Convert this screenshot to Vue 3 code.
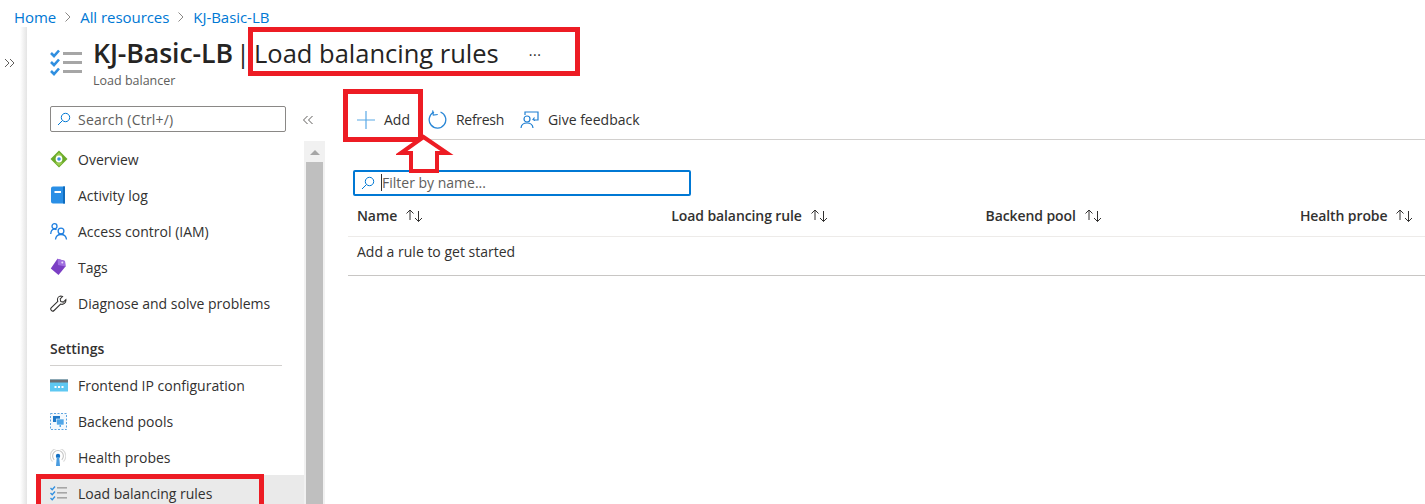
<script setup>
const crumbs = ['Home', 'All resources', 'KJ-Basic-LB']
const top = [
  { id: 'overview', label: 'Overview' },
  { id: 'log', label: 'Activity log' },
  { id: 'iam', label: 'Access control (IAM)' },
  { id: 'tags', label: 'Tags' },
  { id: 'wrench', label: 'Diagnose and solve problems' }
]
const settings = [
  { id: 'frontend', label: 'Frontend IP configuration' },
  { id: 'backend', label: 'Backend pools' },
  { id: 'probe', label: 'Health probes' },
  { id: 'rules', label: 'Load balancing rules', active: true }
]
const cols = ['Name', 'Load balancing rule', 'Backend pool', 'Health probe']
</script>

<template>
  <div class="page">
    <nav class="crumbs">
      <template v-for="(c, i) in crumbs" :key="c">
        <span class="crumb">{{ c }}</span>
        <svg v-if="i < crumbs.length - 1" class="sep" width="8" height="12" viewBox="0 0 8 12"><path d="M1.500 1.500 6 6l-4.500 4.500" fill="none" stroke="#8a8886" stroke-width="1"/></svg>
      </template>
    </nav>
    <div class="body">
      <div class="rail">
        <svg class="rail-chev" width="12" height="10" viewBox="0 0 12 10"><path d="M1 1l4 4-4 4M6 1l4 4-4 4" fill="none" stroke="#605e5c" stroke-width="1"/></svg>
      </div>
      <div class="blade">
        <header class="head">
          <svg class="head-icon" width="32" height="28" viewBox="0 0 32 28">
            <g fill="none" stroke="#2f8fe0" stroke-width="2.600"><path d="M1 4l3 3 5-5.500M1 13l3 3 5-5.500M1 22l3 3 5-5.500"/></g>
            <g fill="#a6a6a6"><rect x="13" y="3" width="19" height="3"/><rect x="13" y="12" width="19" height="3"/><rect x="13" y="21" width="19" height="3"/></g>
          </svg>
          <div class="head-text">
            <h1 class="title"><b>KJ-Basic-LB</b><span class="pipe">|</span><span class="sub-title">Load balancing rules</span><span class="more">···</span></h1>
            <div class="kind">Load balancer</div>
          </div>
        </header>
        <div class="cols">
          <aside class="side">
            <div class="side-top">
              <div class="search">
                <svg width="14" height="14" viewBox="0 0 14 14"><circle cx="8.500" cy="5.500" r="4.200" fill="none" stroke="#0078d4"/><path d="M5.500 8.500 1 13" stroke="#0078d4" fill="none"/></svg>
                <span>Search (Ctrl+/)</span>
              </div>
              <svg class="collapse" width="12" height="10" viewBox="0 0 12 10"><path d="M5.500 1l-4 4 4 4M10.500 1l-4 4 4 4" fill="none" stroke="#605e5c" stroke-width="1"/></svg>
            </div>
            <div class="side-scroll">
              <div class="menu">
                <a v-for="m in top" :key="m.id" class="item">
                  <span class="ico">
                    <svg v-if="m.id === 'overview'" width="18" height="18" viewBox="0 0 18 18"><path d="M9 .5 17.500 9 9 17.500.5 9z" fill="#6bab2a"/><path d="M9 2.500 5.500 6h7zM5 12.500h8L9 16z" fill="#9ccc50"/><circle cx="9" cy="9" r="3.400" fill="#fff"/><circle cx="9" cy="9" r="1.800" fill="#3a8fe0"/></svg>
                    <svg v-else-if="m.id === 'log'" width="16" height="18" viewBox="0 0 16 18"><path d="M1 2.500A2 2 0 0 1 3 .5h12v17H3a2 2 0 0 1-2-2z" fill="#2a8fe6"/><path d="M13 .5h2v17h-2z" fill="#0f6cbd"/><rect x="4.500" y="5" width="6.500" height="2" fill="#fff"/></svg>
                    <svg v-else-if="m.id === 'iam'" width="18" height="17" viewBox="0 0 18 17"><g fill="none" stroke="#1f7fe0" stroke-width="1.300"><circle cx="4.500" cy="3.200" r="2.500"/><path d="M.7 11c.3-3 1.800-4.800 3.800-4.800 .8 0 1.500.2 2 .6"/><circle cx="11" cy="8" r="2.900"/><path d="M5.500 16.500c.3-3 2.600-5 5.500-5s5.200 2 5.500 5"/></g></svg>
                    <svg v-else-if="m.id === 'tags'" width="16" height="18" viewBox="0 0 16 18"><path d="M7.500.8 15 3l.5 5.500-7 8.500L.8 10.500z" fill="#7b3fc4"/><path d="M7.500.8 15 3l.5 5.500L8 7z" fill="#a06fe0"/><circle cx="12.300" cy="4.600" r="1" fill="#e8dbf8"/></svg>
                    <svg v-else width="17" height="17" viewBox="0 0 17 17"><path d="M10.800 1c-2 .2-3.500 2-3.300 4 0 .5.100.9.300 1.300L1.400 12.700a1.900 1.900 0 0 0 2.700 2.800l6.500-6.400c2.800 1 5.700-1.300 5.300-4.400l-2.600 2.400-2.500-.6-.6-2.500 2.400-2.500c-.6-.3-1.200-.5-1.800-.5z" fill="none" stroke="#323130" stroke-width="1.050"/></svg>
                  </span>
                  <span>{{ m.label }}</span>
                </a>
                <div class="group">Settings</div>
                <a v-for="m in settings" :key="m.id" class="item" :class="{ active: m.active }">
                  <span class="ico">
                    <svg v-if="m.id === 'frontend'" width="18" height="13" viewBox="0 0 18 13"><rect y=".5" width="18" height="12" fill="#5ec8f2"/><rect y=".5" width="18" height="3" fill="#6b6f73"/><g fill="#fff"><rect x="4.500" y="7" width="2" height="2"/><rect x="8" y="7" width="2" height="2"/><rect x="11.500" y="7" width="2" height="2"/></g></svg>
                    <svg v-else-if="m.id === 'backend'" width="17" height="17" viewBox="0 0 17 17"><rect x=".5" y=".5" width="16" height="16" fill="#f2f8fd" stroke="#5ea5e0" stroke-dasharray="2 1.500"/><rect x="3" y="3" width="7" height="6" fill="#1e78c8"/><rect x="6.500" y="6" width="7.500" height="6" fill="#4fa6e8" stroke="#fff" stroke-width=".6"/><rect x="9.500" y="12" width="1.500" height="2" fill="#4fa6e8"/></svg>
                    <svg v-else-if="m.id === 'probe'" width="16" height="17" viewBox="0 0 16 17"><g fill="none" stroke="#c4c4c4" stroke-width="1.100"><path d="M4.200 10.800a5.400 5.400 0 1 1 7.600 0"/><path d="M2.500 12.600a7.800 7.800 0 1 1 11 0" stroke="#dadada"/></g><circle cx="8" cy="7" r="2.200" fill="#1470c4"/><path d="M6.800 8h2.400l.8 9H6z" fill="#4a9ce0"/></svg>
                    <svg v-else width="17" height="16" viewBox="0 0 17 16"><g fill="none" stroke="#2f8fe0" stroke-width="1.300"><path d="M.5 3l1.700 1.700L5 1.500M.5 8l1.700 1.700L5 6.500M.5 13l1.700 1.700L5 11.500"/></g><g fill="#a6a6a6"><rect x="7" y="2" width="10" height="1.600"/><rect x="7" y="7" width="10" height="1.600"/><rect x="7" y="12" width="10" height="1.600"/></g></svg>
                  </span>
                  <span>{{ m.label }}</span>
                </a>
              </div>
              <div class="scrollbar">
                <div class="scroll-up"></div>
                <div class="scroll-thumb"></div>
              </div>
            </div>
          </aside>
          <main class="content">
            <div class="toolbar">
              <button class="tool add">
                <svg width="18" height="18" viewBox="0 0 18 18"><path d="M9 0v18M0 9h18" stroke="#5aa9e6" stroke-width="1.200" fill="none"/></svg>
                <span>Add</span>
              </button>
              <button class="tool refresh">
                <svg width="19" height="20" viewBox="0 0 19 20"><path d="M6 2.200A8.300 8.300 0 1 0 12.500 2" fill="none" stroke="#2a87d6" stroke-width="1.300"/><path d="M5 .3v4.800h4.500" fill="none" stroke="#2a87d6" stroke-width="1.100" transform="rotate(-8 5 3)"/></svg>
                <span>Refresh</span>
              </button>
              <button class="tool">
                <svg width="19" height="18" viewBox="0 0 19 18"><g fill="none" stroke="#1f7fd2" stroke-width="1.200"><path d="M5 4V1h13v8h-4"/><circle cx="7" cy="8" r="3"/><path d="M1 17c.3-3.200 2.800-5 6-5s5.700 1.800 6 5"/><path d="M14.500 6.500l-1.500 2 2 1"/></g></svg>
                <span>Give feedback</span>
              </button>
            </div>
            <div class="filter-row">
              <div class="filter">
                <svg width="14" height="14" viewBox="0 0 14 14"><circle cx="8.500" cy="5.500" r="4.200" fill="none" stroke="#0078d4"/><path d="M5.500 8.500 1 13" stroke="#0078d4" fill="none"/></svg>
                <i class="caret"></i>
                <span>Filter by name...</span>
              </div>
            </div>
            <div class="thead">
              <div v-for="c in cols" :key="c" class="th">
                <span>{{ c }}</span>
                <svg width="19" height="13" viewBox="0 0 19 13"><g fill="none" stroke="#323130" stroke-width="1"><path d="M5 11V1M1.500 4.500 5 1l3.500 3.500"/><path d="M13.500 2v10.500M10 9l3.500 3.500L17 9"/></g></svg>
              </div>
            </div>
            <div class="empty">Add a rule to get started</div>
          </main>
        </div>
      </div>
    </div>

    <div class="mark mark-title"></div>
    <div class="mark mark-add"></div>
    <div class="mark mark-rule"></div>
    <svg class="arrow" width="60" height="42" viewBox="0 0 60 42"><path d="M27.500 4 51 20H41v18H15V20H5z" fill="#fff" stroke="#ed1c24" stroke-width="4"/></svg>
  </div>
</template>

<style>
html, body { margin: 0; background: #fff; }
</style>

<style scoped>
.page { position: relative; width: 1425px; height: 504px; overflow: hidden; background: #fff; font-family: "Open Sans", "Noto Sans", sans-serif; font-size: 14px; color: #323130; }
.crumbs { height: 34px; display: flex; align-items: center; padding-left: 14px; gap: 8px; color: #0078d4; font-size: 15px; letter-spacing: -.05px; box-sizing: border-box; }
.body { display: flex; height: 470px; }
.rail { width: 27px; height: 477px; margin-top: -7px; flex: none; padding-top: 31px; box-sizing: border-box; padding-left: 4px; background: linear-gradient(to left, #e4e4e4, #fff 7px); }
.rail-chev { display: block; }
.blade { flex: 1; min-width: 0; }
.head { height: 65px; display: flex; box-sizing: border-box; padding-left: 23px; }
.head-icon { margin-top: 15px; flex: none; }
.head-text { margin-left: 11px; }
.title { margin: 0; padding-top: 1px; font-size: 25.500px; line-height: 36px; font-weight: 400; white-space: nowrap; color: #252423; }
.title b { font-weight: 600; font-size: 26.700px; letter-spacing: -.1px; }
.pipe { margin: 0 4px 0 3px; }
.more { font-size: 14px; margin-left: 30px; vertical-align: 3px; letter-spacing: .5px; }
.kind { font-size: 12.500px; line-height: 16px; color: #605e5c; }
.cols { display: flex; height: 405px; }
.side { width: 298px; flex: none; }
.side-top { height: 42px; display: flex; align-items: flex-start; padding-left: 23px; padding-top: 7px; box-sizing: border-box; }
.search { width: 236px; height: 26px; box-sizing: border-box; border: 1px solid #8a8886; border-radius: 2px; display: flex; align-items: center; padding-left: 6px; gap: 7px; color: #605e5c; letter-spacing: .2px; }
.collapse { margin: 9px 0 0 16px; }
.side-scroll { display: flex; height: 363px; }
.menu { width: 277px; flex: none; }
.item { display: flex; align-items: center; height: 36px; padding-left: 23px; box-sizing: border-box; }
.ico { width: 28px; flex: none; display: flex; align-items: center; justify-content: flex-start; }
.item.active { background: #eaeaea; margin-left: 9px; padding-left: 14px; }
.group { height: 45px; margin: 0 22px 1px 23px; padding-top: 14px; box-sizing: border-box; line-height: 28px; font-weight: 600; border-bottom: 1px solid #d2d0ce; }
.scrollbar { width: 21px; background: #f1f1f1; display: flex; flex-direction: column; align-items: center; }
.scroll-up { width: 0; height: 0; margin: 9px 0 7px; border-left: 5px solid transparent; border-right: 5px solid transparent; border-bottom: 5px solid #a6a6a6; }
.scroll-thumb { width: 17px; flex: 1; background: #bfbfbf; }
.content { flex: 1; min-width: 0; padding-left: 23px; }
.toolbar { height: 40px; margin-top: 1px; display: flex; align-items: center; border-bottom: 1px solid #d2d0ce; box-sizing: border-box; padding-left: 9px; }
.tool { border: 0; background: none; padding: 0; margin: 0 17px 0 0; display: flex; align-items: center; gap: 9px; font: inherit; color: #323130; }
.tool.add { margin-right: 18px; }
.tool.refresh { margin-right: 16px; letter-spacing: -.3px; }
.filter-row { padding: 30px 0 0 5px; }
.filter { width: 338px; height: 26px; box-sizing: border-box; border: 2px solid #0078d4; border-radius: 2px; display: flex; align-items: center; padding: 0 0 1px 6px; color: #605e5c; }
.filter svg { margin-right: 6px; }
.caret { width: 1px; height: 17px; background: #323130; }
.thead { display: grid; grid-template-columns: repeat(4, 314.300px); height: 41px; padding: 0 0 2px 9px; align-items: center; border-bottom: 1px solid #edebe9; box-sizing: border-box; font-weight: 600; letter-spacing: -.1px; }
.th { display: flex; align-items: center; gap: 8px; white-space: nowrap; }
.empty { height: 39px; line-height: 30px; padding-left: 9px; border-bottom: 1px solid #c8c6c4; box-sizing: border-box; }
.mark { position: absolute; border: 5px solid #ed1c24; box-sizing: border-box; pointer-events: none; }
.mark-title { left: 248px; top: 27px; width: 332px; height: 49px; }
.mark-add { left: 343px; top: 89px; width: 80px; height: 53px; }
.mark-rule { left: 36px; top: 474px; width: 228px; height: 40px; }
.arrow { position: absolute; left: 396px; top: 133px; }
</style>
